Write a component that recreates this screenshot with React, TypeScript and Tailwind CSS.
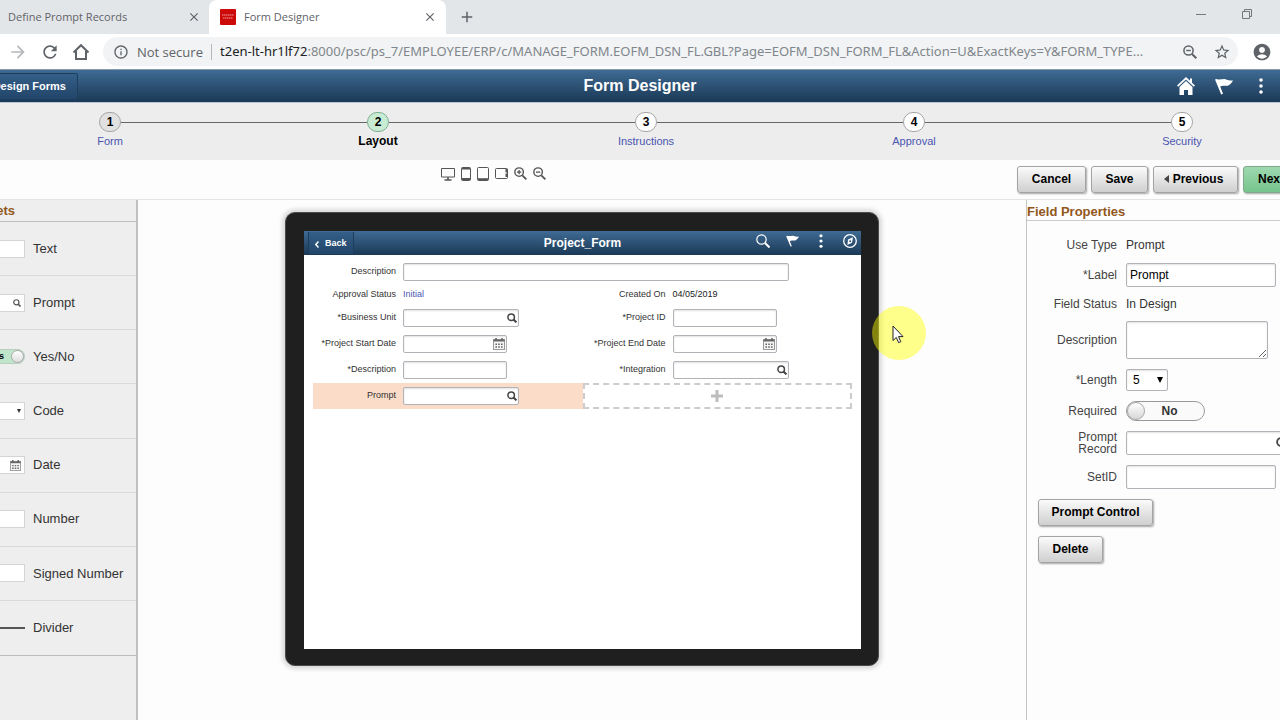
import type { ReactNode } from "react";
import {
  MdAccountCircle,
  MdAdd,
  MdArrowForward,
  MdClose,
  MdInfoOutline,
  MdRefresh,
  MdStarBorder,
} from "react-icons/md";

// ─── Data ─────────────────────────────────────────────────────────────────────
const steps = [
  { n: 1, label: "Form", state: "done" },
  { n: 2, label: "Layout", state: "current" },
  { n: 3, label: "Instructions", state: "todo" },
  { n: 4, label: "Approval", state: "todo" },
  { n: 5, label: "Security", state: "todo" },
];

const widgets = [
  { label: "Text", kind: "text" },
  { label: "Prompt", kind: "prompt" },
  { label: "Yes/No", kind: "toggle" },
  { label: "Code", kind: "select" },
  { label: "Date", kind: "date" },
  { label: "Number", kind: "text" },
  { label: "Signed Number", kind: "text" },
  { label: "Divider", kind: "divider" },
];

const barGradient = "bg-gradient-to-b from-[#3f6b94] to-[#1b3956]";
const fieldBox =
  "border border-[#b0b3b8] rounded-[2px] bg-white shadow-[inset_0_1px_2px_rgba(0,0,0,0.12)]";
const pushButton =
  "flex items-center justify-center h-[27px] shrink-0 whitespace-nowrap rounded-[3px] border pb-[2px] text-xs font-bold text-black shadow-[1px_1px_2px_rgba(0,0,0,0.35)]";
const greyButton = "border-[#a4a4a4] bg-gradient-to-b from-[#fbfbfb] to-[#cfcfcf]";

// ─── Icons ────────────────────────────────────────────────────────────────────
function SearchIcon({ className }: { className?: string }) {
  return (
    <svg viewBox="0 0 12 12" className={className} fill="none" stroke="currentColor">
      <circle cx="5" cy="5" r="3.9" strokeWidth="1.8" />
      <path d="M7.8 7.8 11.300 11.300" strokeWidth="2.4" />
    </svg>
  );
}

function CalendarIcon({ className }: { className?: string }) {
  return (
    <svg viewBox="0 0 12 12" className={className}>
      <rect x="0.5" y="1.5" width="11" height="10" fill="#f4f4f4" stroke="#999" />
      <path d="M0.5 1.5h11v2h-11z" fill="#666" />
      <path d="M3 0v3M9 0v3" stroke="#666" strokeWidth="1.6" />
      <path d="M2.4 6.2h1.6M5.2 6.2h1.6M8 6.2h1.6M2.4 9h1.6M5.2 9h1.6M8 9h1.6" stroke="#666" strokeWidth="1.5" />
    </svg>
  );
}

function FlagIcon({ className }: { className?: string }) {
  return (
    <svg viewBox="0 0 18 17" className={className} fill="currentColor">
      <path d="M0 1.600 1.600 1C5 2.500 8 .4 11 1.400c2.400 1 4.800 1.400 7 .9-1.200 2.800-3.200 5-5.400 5.400-2.700.5-5-.9-7.400.9L8 15.800l-1.800.6z" />
    </svg>
  );
}

function DotsIcon({ className }: { className?: string }) {
  return (
    <svg viewBox="0 0 4 16" className={className} fill="currentColor">
      <circle cx="2" cy="2" r="1.8" />
      <circle cx="2" cy="8" r="1.8" />
      <circle cx="2" cy="14" r="1.8" />
    </svg>
  );
}

function MagnifierIcon({ sign, className }: { sign?: "plus" | "minus"; className?: string }) {
  return (
    <svg viewBox="0 0 14 14" className={className} fill="none" stroke="currentColor">
      <circle cx="5.5" cy="5.5" r="4.6" strokeWidth="1.5" />
      <path d="m9 9 4.300 4.300" strokeWidth="2" />
      {sign && <path d="M3.200 5.500h4.600" strokeWidth="1.400" />}
      {sign === "plus" && <path d="M5.500 3.200v4.600" strokeWidth="1.400" />}
    </svg>
  );
}

// ─── Browser frame ────────────────────────────────────────────────────────────
function Browser() {
  return (
    <header className="font-['Open_Sans',sans-serif] text-[#5f6368]">
      <div className="flex h-[34px] bg-[#e3e6e9] text-[11px]">
        <div className="flex w-[209px] items-center justify-between pl-2 pr-2">
          <span>Define Prompt Records</span>
          <button aria-label="Close tab"><MdClose size={14} /></button>
        </div>
        <div className="flex w-[237px] items-center rounded-t-lg bg-white pl-[11px] pr-[9px]">
          <svg viewBox="0 0 16 16" className="mr-2 size-4">
            <rect width="16" height="16" rx="1" fill="#cc0a0a" />
            <path d="M2 6h12M3 9h10" stroke="#f2a0a0" strokeWidth="1.2" strokeDasharray="1.5 .5" />
          </svg>
          <span className="flex-1">Form Designer</span>
          <button aria-label="Close tab"><MdClose size={14} /></button>
        </div>
        <button aria-label="New tab" className="ml-3"><MdAdd size={18} /></button>
        <div className="ml-auto flex items-center gap-9 pr-7 pb-[6px]">
          <button aria-label="Minimize">
            <svg viewBox="0 0 10 10" className="size-[10px]" stroke="#777"><path d="M0 5.500h10" /></svg>
          </button>
          <button aria-label="Restore">
            <svg viewBox="0 0 10 10" className="size-[10px]" fill="none" stroke="#777">
              <path d="M.5 2.500h7v7h-7zM2.500 2.500v-2h7v7h-2" />
            </svg>
          </button>
        </div>
      </div>

      <div className="flex h-9 items-center border-b border-[#8a9aa8] bg-white pl-2 pr-2">
        <div className="flex w-[95px] items-center gap-3">
          <button aria-label="Forward"><MdArrowForward size={20} className="text-[#b5b8bb]" /></button>
          <button aria-label="Reload"><MdRefresh size={20} /></button>
          <button aria-label="Home">
            <svg viewBox="0 0 18 18" className="size-[18px]" fill="none" stroke="currentColor" strokeWidth="2">
              <path d="M1.500 9.500 9 2.200l7.500 7.300M4 8v8h10V8" />
            </svg>
          </button>
        </div>
        <div className="flex h-[29px] min-w-0 flex-1 items-center rounded-full bg-[#f1f3f4] pl-[10px] pr-[7px] text-[13px]">
          <MdInfoOutline size={16} className="shrink-0" />
          <span className="ml-2 w-[75px] shrink-0 border-r border-[#b5b8bb] whitespace-nowrap leading-4">Not secure</span>
          <span className="ml-2 min-w-0 flex-1 truncate font-['Noto_Sans',sans-serif] text-[#80868b]">
            <span className="text-[#202124]">t2en-lt-hr1lf72</span>
            :8000/psc/ps_7/EMPLOYEE/ERP/c/MANAGE_FORM.EOFM_DSN_FL.GBL?Page=EOFM_DSN_FORM_FL&amp;Action=U&amp;ExactKeys=Y&amp;FORM_TYPE...
          </span>
          <button aria-label="Zoom" className="mx-4"><MagnifierIcon sign="minus" className="size-[14px]" /></button>
          <button aria-label="Bookmark"><MdStarBorder size={18} /></button>
        </div>
        <button aria-label="Account" className="ml-[14px]"><MdAccountCircle size={20} /></button>
      </div>
    </header>
  );
}

// ─── Banner and train ─────────────────────────────────────────────────────────
function Banner() {
  return (
    <div className={`grid h-8 grid-cols-[1fr_auto_1fr] items-center text-white ${barGradient}`}>
      <button className="flex h-[27px] w-[78px] justify-end overflow-hidden rounded-r-[2px] border border-l-0 border-[#1d3d5d] bg-gradient-to-b from-[#345f88] to-[#22456a] pr-[11px] text-[11px] font-bold leading-6 whitespace-nowrap">
        Design Forms
      </button>
      <h1 className="text-base font-bold">Form Designer</h1>
      <div className="flex items-center justify-end gap-5 pr-[17px]">
        <button aria-label="Home">
          <svg viewBox="0 0 18 18" className="size-[18px]" fill="currentColor">
            <path d="M9 0 0 8.600l1.200 1.200L9 2.600l7.800 7.200L18 8.600l-3-2.900V1.500h-2v2.300z" />
            <path d="m9 4-6.500 6v8H7v-5h4v5h4.500v-8z" />
          </svg>
        </button>
        <button aria-label="Notifications"><FlagIcon className="h-[17px] w-[18px]" /></button>
        <button aria-label="Actions" className="pl-[6px]"><DotsIcon className="h-4 w-1" /></button>
      </div>
    </div>
  );
}

function Train() {
  return (
    <nav className="h-[58px] overflow-hidden border-t border-[#b8c6d3] bg-[#ededed]">
      <ol className="-mr-9 -ml-6 grid grid-cols-5 pt-[9px]">
        {steps.map((s, i) => (
          <li key={s.n} className="flex flex-col items-center">
            <div className="flex w-full items-center">
              <span className={`h-px flex-1 ${i === 0 ? "" : "bg-[#666]"}`} />
              <span
                className={`flex h-5 w-[22px] items-center justify-center rounded-full border text-xs font-bold text-black ${
                  s.state === "current"
                    ? "border-[#7fae90] bg-[#c8ecd3]"
                    : s.state === "done"
                      ? "border-[#a5a5a5] bg-[#e1e1e1]"
                      : "border-[#a5a5a5] bg-white"
                }`}
              >
                {s.n}
              </span>
              <span className={`h-px flex-1 ${i === steps.length - 1 ? "" : "bg-[#666]"}`} />
            </div>
            <a
              href="#"
              className={`mt-px leading-4 ${
                s.state === "current" ? "text-xs font-bold text-black" : "text-[11px] text-[#4a55b0]"
              }`}
            >
              {s.label}
            </a>
          </li>
        ))}
      </ol>
    </nav>
  );
}

function Toolbar() {
  return (
    <div className="flex h-10 items-center overflow-hidden border-b border-[#e4e4e4]">
      <div className="flex flex-1 items-center justify-center gap-[6px] pb-3 text-[#555]">
        <button aria-label="Desktop">
          <svg viewBox="0 0 14 14" className="size-[14px]" fill="none" stroke="currentColor">
            <path d="M.5 1.500h13v8.500H.5z" />
            <path d="M7 10v2.500M3.500 13h7" strokeWidth="1.600" />
          </svg>
        </button>
        <button aria-label="Phone">
          <svg viewBox="0 0 10 14" className="h-[14px] w-[10px]" fill="none" stroke="currentColor">
            <rect x=".5" y=".5" width="9" height="13" rx="1" />
            <path d="M1 1.500h8M1 12h8" strokeWidth="2" />
          </svg>
        </button>
        <button aria-label="Tablet">
          <svg viewBox="0 0 12 14" className="h-[14px] w-3" fill="none" stroke="currentColor">
            <rect x=".5" y=".5" width="11" height="13" rx="1" />
            <path d="M1 12.200h10" strokeWidth="2" />
          </svg>
        </button>
        <button aria-label="Tablet landscape">
          <svg viewBox="0 0 13 14" className="h-[14px] w-[13px]" fill="none" stroke="currentColor">
            <rect x=".5" y="1.500" width="12" height="10" rx="1" />
            <path d="M11.500 2v9" strokeWidth="2" strokeDasharray="3.500 1" />
          </svg>
        </button>
        <button aria-label="Zoom in"><MagnifierIcon sign="plus" className="size-[13px]" /></button>
        <button aria-label="Zoom out"><MagnifierIcon sign="minus" className="size-[13px]" /></button>
      </div>
      <div className="flex w-[293px] shrink-0 gap-[5px] pl-[30px]">
        <button className={`${pushButton} ${greyButton} w-[69px]`}>Cancel</button>
        <button className={`${pushButton} ${greyButton} w-[57px]`}>Save</button>
        <button className={`${pushButton} ${greyButton} w-[85px] gap-1 pr-1`}>
          <svg viewBox="0 0 5 8" className="h-2 w-[5px]" fill="#444"><path d="M5 0v8L0 4z" /></svg>
          Previous
        </button>
        <button className={`${pushButton} w-[65px] gap-1 border-[#7fa98d] bg-gradient-to-b from-[#9ed9af] to-[#76c48d]`}>
          Next
          <svg viewBox="0 0 5 8" className="h-2 w-[5px]" fill="#444"><path d="M0 0v8l5-4z" /></svg>
        </button>
      </div>
    </div>
  );
}

// ─── Widget palette ───────────────────────────────────────────────────────────
function WidgetSample({ kind }: { kind: string }) {
  if (kind === "divider") return <span className="h-[2px] w-[25px] bg-[#555]" />;
  if (kind === "toggle") {
    return (
      <span className="flex h-[15px] w-[25px] items-center justify-end rounded-r-full border border-l-0 border-[#b9cfc0] bg-[#bfe6cb]">
        <span className="flex w-1 justify-end text-[9px] font-bold text-black">Yes</span>
        <span className="ml-[7px] size-[13px] shrink-0 rounded-full border border-[#aaa] bg-gradient-to-b from-white to-[#ddd]" />
      </span>
    );
  }
  return (
    <span className="flex h-[18px] w-[25px] items-center justify-end border border-l-0 border-[#d4d4d4] bg-white pr-[3px] text-[#555]">
      {kind === "prompt" && <SearchIcon className="size-2" />}
      {kind === "select" && <svg viewBox="0 0 4 4" className="size-1" fill="#333"><path d="M0 0h4L2 4z" /></svg>}
      {kind === "date" && <CalendarIcon className="size-[11px]" />}
    </span>
  );
}

function Palette() {
  return (
    <aside className="w-[138px] shrink-0 overflow-hidden border-r-2 border-[#c0c0c0] bg-[#eee]">
      <h2 className="flex h-[21px] w-[15px] items-center justify-end text-[13px] leading-6 font-bold text-[#92571b]">
        Widgets
      </h2>
      <ul className="grid h-[435px] auto-rows-fr border-y border-[#bdbdbd]">
        {widgets.map((w) => (
          <li
            key={w.label}
            className="flex items-center gap-2 border-b border-[#dadada] text-[13px] text-[#333] last:border-b-0"
          >
            <WidgetSample kind={w.kind} />
            {w.label}
          </li>
        ))}
      </ul>
    </aside>
  );
}

// ─── Device preview ───────────────────────────────────────────────────────────
function FormRow({ id, label, width, icon }: { id: string; label: string; width: string; icon?: ReactNode }) {
  return (
    <div className="flex h-[26px] items-center">
      <label htmlFor={id} className="mr-[7px] w-[83px] shrink-0 text-right whitespace-nowrap">{label}</label>
      <span className={`relative ${width}`}>
        <input id={id} type="text" className={`block h-[18px] w-full ${fieldBox}`} />
        {icon && <span className="absolute inset-y-0 right-[2px] flex items-center text-[#444]">{icon}</span>}
      </span>
    </div>
  );
}

function Device() {
  const search = <SearchIcon className="size-[10px]" />;
  const calendar = <CalendarIcon className="size-3" />;
  return (
    <div className="relative mt-3 w-[594px] rounded-[10px] border border-[#4a4a4a] bg-[#1f1f1f] pt-[18px] pr-[17px] pb-4 pl-[18px] shadow-[0_0_4px_3px_rgba(0,0,0,0.14)]">
      <div className="h-[418px] bg-white text-[9px] text-[#333]">
        <div className={`grid h-6 grid-cols-[1fr_auto_1fr] items-center text-white ${barGradient}`}>
          <button className="ml-1 flex h-[22px] w-[46px] items-center gap-[6px] border-x border-[#1d3d5d] bg-gradient-to-b from-[#345f88] to-[#22456a] pt-[2px] pl-[6px] font-bold">
            <svg viewBox="0 0 4 7" className="h-[7px] w-1" fill="none" stroke="currentColor" strokeWidth="1.500">
              <path d="M3.500.5.800 3.500l2.700 3" />
            </svg>
            Back
          </button>
          <h2 className="text-xs font-bold">Project_Form</h2>
          <div className="flex items-center justify-end gap-4 pr-1 pb-1">
            <button aria-label="Search">
              <svg viewBox="0 0 14 14" className="size-[14px]" fill="none" stroke="currentColor">
                <circle cx="5.500" cy="5.500" r="4.700" strokeWidth="1.200" />
                <path d="m9 9 4.500 4.500" strokeWidth="2" />
              </svg>
            </button>
            <button aria-label="Notifications"><FlagIcon className="h-3 w-[13px]" /></button>
            <button aria-label="Actions" className="px-1"><DotsIcon className="h-[14px] w-[4px]" /></button>
            <button aria-label="Navigator">
              <svg viewBox="0 0 14 14" className="size-[14px]" fill="none" stroke="currentColor">
                <circle cx="7" cy="7" r="6.300" strokeWidth="1.300" />
                <path d="m10 3.200-1 5.600-4.600 2.200.6-5.600z" fill="currentColor" stroke="none" />
                <circle cx="7.200" cy="7.200" r="1" fill="#2c5379" stroke="none" />
              </svg>
            </button>
          </div>
        </div>

        <form className="px-[9px] pt-1">
          <FormRow id="desc" label="Description" width="w-[386px]" />
          <div className="grid h-5 grid-cols-2 items-center">
            <div className="flex gap-[7px]">
              <span className="w-[83px] text-right">Approval Status</span>
              <a href="#" className="text-[#4a55b0]">Initial</a>
            </div>
            <div className="flex gap-[7px]">
              <span className="w-[83px] text-right">Created On</span>
              <span className="text-[#222]">04/05/2019</span>
            </div>
          </div>
          <div className="grid grid-cols-2">
            <FormRow id="unit" label="*Business Unit" width="w-[116px]" icon={search} />
            <FormRow id="project" label="*Project ID" width="w-[104px]" />
            <FormRow id="start" label="*Project Start Date" width="w-[104px]" icon={calendar} />
            <FormRow id="end" label="*Project End Date" width="w-[104px]" icon={calendar} />
            <FormRow id="desc2" label="*Description" width="w-[104px]" />
            <FormRow id="integration" label="*Integration" width="w-[116px]" icon={search} />
            <div className="bg-[#fadcc9]">
              <FormRow id="prompt" label="Prompt" width="w-[116px]" icon={search} />
            </div>
            <button type="button" aria-label="Add field" className="flex items-center justify-center border-2 border-dashed border-[#ccc]">
              <svg viewBox="0 0 12 12" className="size-3" stroke="#bdbdbd" strokeWidth="3"><path d="M6 0v12M0 6h12" /></svg>
            </button>
          </div>
        </form>
      </div>

      {/* Pointer highlight */}
      <div className="pointer-events-none absolute top-[93px] -right-12 size-[54px] rounded-full bg-[#ffff00]/45" />
      <svg viewBox="0 0 12 19" className="pointer-events-none absolute top-[112px] -right-[26px] h-[19px] w-3">
        <path d="M1 1v14.500l3.300-3.100 2.300 5.300 2.200-1-2.300-5.100H11z" fill="#fff" stroke="#222" />
      </svg>
    </div>
  );
}

// ─── Field properties ─────────────────────────────────────────────────────────
function Property({ label, htmlFor, children }: { label: string; htmlFor?: string; children: ReactNode }) {
  return (
    <div className="flex items-center gap-[9px]">
      <label htmlFor={htmlFor} className="w-[90px] shrink-0 pl-10 text-right leading-3 text-[#444] has-[+span]:pl-0">
        {label}
      </label>
      {children}
    </div>
  );
}

function Properties() {
  return (
    <aside className="w-[254px] shrink-0 overflow-hidden border-l border-[#c4c4c4] text-xs text-[#333]">
      <h2 className="h-[21px] border-b border-[#ccc] text-[13px] leading-6 font-bold text-[#92571b]">Field Properties</h2>
      <div className="flex flex-col gap-[10px] pt-4">
        <Property label="Use Type"><span className="leading-4">Prompt</span></Property>
        <Property label="*Label" htmlFor="p-label">
          <span><input id="p-label" type="text" defaultValue="Prompt" className={`block h-6 w-[150px] px-[3px] text-black ${fieldBox}`} /></span>
        </Property>
        <Property label="Field Status"><span className="leading-[14px]">In Design</span></Property>
        <Property label="Description" htmlFor="p-desc">
          <span><textarea id="p-desc" className={`block h-[38px] w-[142px] ${fieldBox}`} /></span>
        </Property>
        <Property label="*Length" htmlFor="p-length">
          <span className="relative">
            <select id="p-length" className={`block h-[22px] w-[42px] appearance-none pl-[6px] text-black ${fieldBox}`}>
              <option>5</option>
            </select>
            <svg viewBox="0 0 6 6" className="pointer-events-none absolute top-2 right-[5px] size-[6px]"><path d="M0 0h6L3 6z" /></svg>
          </span>
        </Property>
        <Property label="Required" htmlFor="p-required">
          <span className="relative flex h-5 w-[79px] items-center justify-center rounded-full border border-[#999] bg-[#fafafa] pl-2 font-bold">
            <input
              id="p-required"
              type="checkbox"
              className="absolute top-0 left-0 size-[18px] appearance-none rounded-full border border-[#a8a8a8] bg-gradient-to-b from-white to-[#d8d8d8]"
            />
            No
          </span>
        </Property>
        <Property label="Prompt Record" htmlFor="p-record">
          <div className="relative shrink-0">
            <input id="p-record" type="text" className={`block h-6 w-[170px] ${fieldBox}`} />
            <SearchIcon className="absolute top-[6px] right-2 size-3 text-[#444]" />
          </div>
        </Property>
        <Property label="SetID" htmlFor="p-setid">
          <span><input id="p-setid" type="text" className={`block h-6 w-[150px] ${fieldBox}`} /></span>
        </Property>
        <button className={`${pushButton} ${greyButton} ml-[11px] w-[115px]`}>Prompt Control</button>
        <button className={`${pushButton} ${greyButton} ml-[11px] w-[65px]`}>Delete</button>
      </div>
    </aside>
  );
}

export default function App() {
  return (
    <div className="flex min-h-screen flex-col overflow-hidden bg-[#fdfdfd] font-['Liberation_Sans',Arial,sans-serif]">
      <Browser />
      <Banner />
      <Train />
      <Toolbar />
      <div className="flex flex-1">
        <Palette />
        <main className="flex flex-1 justify-center">
          <div><Device /></div>
        </main>
        <Properties />
      </div>
    </div>
  );
}
